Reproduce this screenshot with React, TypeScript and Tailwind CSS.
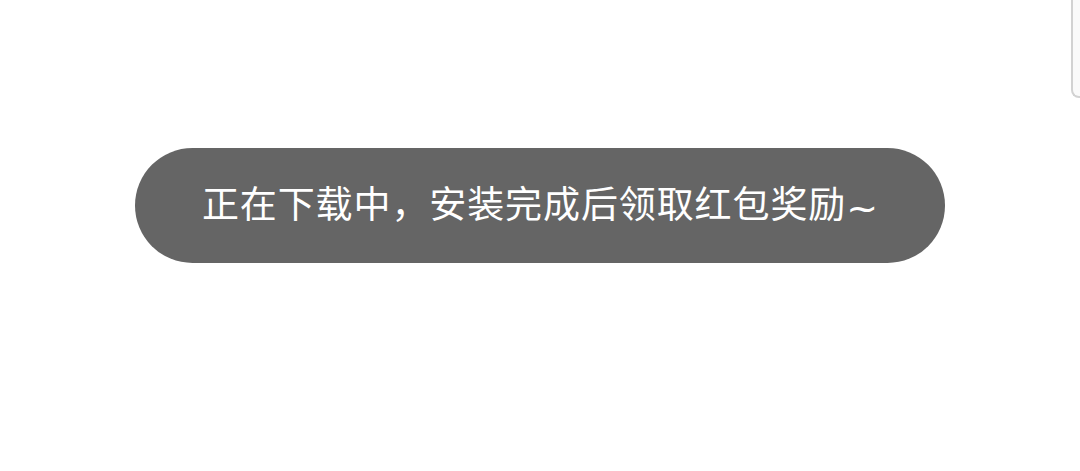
// App.tsx
export default function App() {
  return (
    <div className="relative w-[1080px] h-[471px] overflow-hidden bg-white">
      {/* scrollbar thumb at the right edge */}
      <div className="absolute right-0 top-0 w-[9px] h-[98px] border-l-2 border-b-2 border-[#d2d2d2] rounded-bl-[8px] bg-[#fafafa]" />

      <div className="pt-[148px] pl-[135px]">
        <div className="flex items-center justify-center w-[810px] h-[115px] rounded-full bg-[#656565]">
          <span
            className="text-white text-[37px] leading-none tracking-[0.9px]"
            style={{ fontFamily: '"Noto Sans CJK SC", "Noto Sans", sans-serif' }}
          >
            正在下载中，安装完成后领取红包奖励
            <span className="text-[38px] align-[-3px] tracking-normal" style={{ fontFamily: '"DejaVu Sans", sans-serif' }}>~</span>
          </span>
        </div>
      </div>
    </div>
  )
}
